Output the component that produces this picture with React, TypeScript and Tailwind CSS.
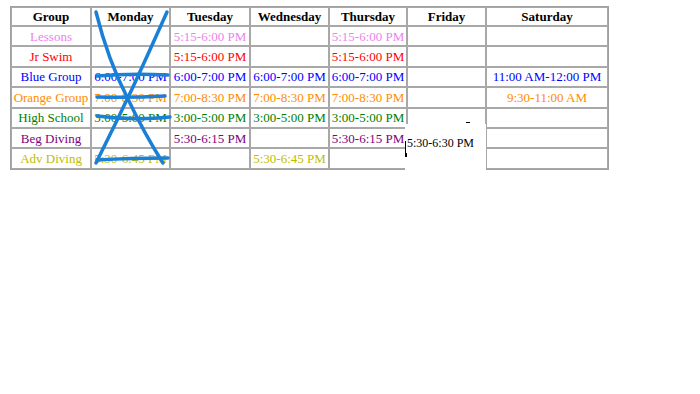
const days = ['Monday', 'Tuesday', 'Wednesday', 'Thursday', 'Friday', 'Saturday'];

const rows = [
  { group: 'Lessons', color: 'text-[#ee82ee]', times: ['', '5:15-6:00 PM', '', '5:15-6:00 PM', '', ''] },
  { group: 'Jr Swim', color: 'text-[#ff0000]', times: ['', '5:15-6:00 PM', '', '5:15-6:00 PM', '', ''] },
  {
    group: 'Blue Group',
    color: 'text-[#0000ff]',
    times: ['6:00-7:00 PM', '6:00-7:00 PM', '6:00-7:00 PM', '6:00-7:00 PM', '', '11:00 AM-12:00 PM'],
  },
  {
    group: 'Orange Group',
    color: 'text-[#ff8c00]',
    times: ['7:00-8:30 PM', '7:00-8:30 PM', '7:00-8:30 PM', '7:00-8:30 PM', '', '9:30-11:00 AM'],
  },
  {
    group: 'High School',
    color: 'text-[#008000]',
    times: ['3:00-5:00 PM', '3:00-5:00 PM', '3:00-5:00 PM', '3:00-5:00 PM', '', ''],
  },
  { group: 'Beg Diving', color: 'text-[#800080]', times: ['', '5:30-6:15 PM', '', '5:30-6:15 PM', '', ''] },
  { group: 'Adv Diving', color: 'text-[#bdbd00]', times: ['5:30-6:45 PM', '', '5:30-6:45 PM', '', '', ''] },
];

const colWidths = ['w-[80px]', 'w-[79px]', 'w-[80px]', 'w-[79px]', 'w-[78px]', 'w-[79px]', 'w-[122px]'];

function Scribble() {
  // hand-drawn X and strike-throughs over the Monday column
  return (
    <svg
      className="absolute left-0 top-0 pointer-events-none"
      width="700"
      height="394"
      viewBox="0 0 700 394"
      fill="none"
      stroke="#1a7fd6"
      strokeWidth="3.5"
      strokeLinecap="round"
    >
      <path d="M96 12 Q108 60 127 97 Q145 135 163 163" />
      <path d="M167 12 Q150 50 133 87 Q115 125 96 163" />
      <path d="M97 76 Q130 73 168 75" />
      <path d="M97 97 Q130 98 165 96" />
      <path d="M97 116 Q135 121 170 117" />
      <path d="M97 160 Q130 158 168 158" />
    </svg>
  );
}

export default function App() {
  return (
    <div className="relative w-[700px] h-[394px] bg-white font-['Liberation_Serif',serif] text-[13px] text-black">
      <div className="pl-[10px] pt-[6px]">
        <table className="table-fixed w-[599px] border-separate border-spacing-0 border border-[#a0a0a0]">
          <colgroup>
            {colWidths.map((w, i) => (
              <col key={i} className={w} />
            ))}
          </colgroup>
          <thead>
            <tr>
              <th className="h-[19px] border border-[#a8a8a8] p-0 font-bold leading-none">Group</th>
              {days.map((d) => (
                <th key={d} className="h-[19px] border border-[#a8a8a8] p-0 font-bold leading-none">
                  {d}
                </th>
              ))}
            </tr>
          </thead>
          <tbody>
            {rows.map((r) => (
              <tr key={r.group}>
                <td className={`h-[20.4px] border border-[#a8a8a8] p-0 text-center leading-none whitespace-nowrap ${r.color}`}>
                  {r.group}
                </td>
                {r.times.map((t, i) => (
                  <td
                    key={i}
                    className={`h-[20.4px] border border-[#a8a8a8] p-0 text-center leading-none whitespace-nowrap ${r.color}`}
                  >
                    {t}
                  </td>
                ))}
              </tr>
            ))}
          </tbody>
        </table>
      </div>

      <Scribble />

      {/* stray pasted box over Friday */}
      <div className="absolute left-[405px] top-[124px] w-[81px] h-[47px] bg-white">
        <div className="absolute left-[61px] top-[-2px] w-[4px] h-px bg-black" />
        <div className="absolute left-0 top-[17px] w-px h-[16px] bg-black" />
        <div className="absolute left-0 top-[29px] w-[2px] h-[4px] bg-black" />
        <span className="absolute left-[2px] top-[13px] text-[12px] leading-none text-black whitespace-nowrap">
          5:30-6:30 PM
        </span>
      </div>
    </div>
  );
}
